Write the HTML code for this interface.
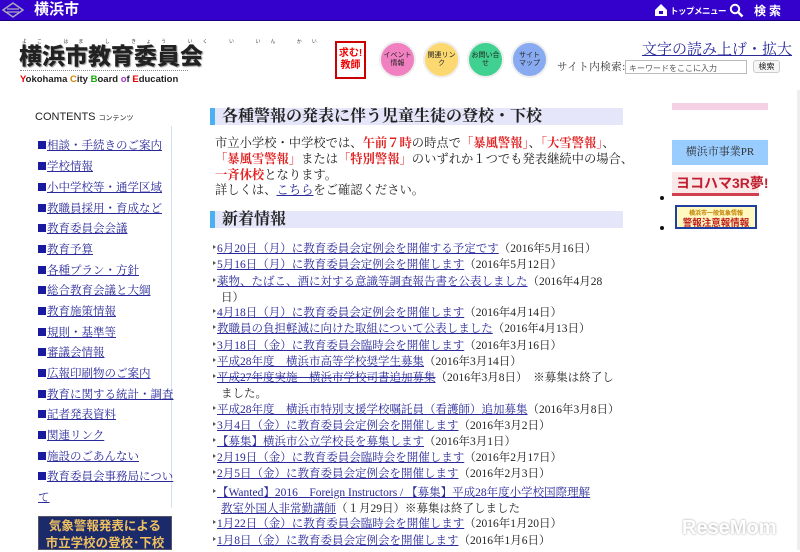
<!DOCTYPE html>
<html><head><meta charset="utf-8"><style>
*{margin:0;padding:0;box-sizing:border-box}
body{width:800px;height:550px;overflow:hidden;background:#fff;font-family:"Liberation Serif","Noto Serif CJK SC","Noto Sans CJK JP",serif;color:#222;position:relative}
.abs{position:absolute}
a{color:#2a2a9a;text-decoration:underline}
.top{left:0;top:0;width:800px;height:21px;background:#3300cc;border-bottom:1px solid #1a0080}
.g{font-family:"Liberation Sans","Noto Sans CJK JP",sans-serif}
.nav div{position:absolute;left:38px;font-size:11.5px;white-space:nowrap}
.nav a{color:#2a2a9a}
.sq{display:inline-block;width:8px;height:8px;background:#1a1aa0;margin-right:1px;vertical-align:0}
.h{left:210px;width:413px;height:17px;background:#e6e6fa;font-size:16px;line-height:17px;font-weight:bold;padding-left:7px;border-left:5px solid #4ab0f0;color:#222}
.p{left:215px;font-size:12.3px;line-height:15.8px;width:420px}
.r{color:#e02020;font-weight:bold}
.news div{position:absolute;left:217px;font-size:11.5px;white-space:nowrap}
.news div.m:before{content:"";position:absolute;left:-4px;top:5px;border-left:3px solid #555;border-top:2.5px solid transparent;border-bottom:2.5px solid transparent}
.c{border-radius:50%;width:37px;height:37px;top:41px;font-size:7px;text-align:center;display:flex;align-items:center;justify-content:center;line-height:8px;color:#222;font-family:"Liberation Sans","Noto Sans CJK JP",sans-serif;border:2px solid #eee}
</style></head><body>
<div class="abs top"></div>
<svg class="abs" style="left:2px;top:2px" width="22" height="16" viewBox="0 0 22 16"><path d="M1 8 L11 1 L21 8 L11 15 Z" fill="none" stroke="#aab" stroke-width="1.5"/><path d="M5 7h12M5 10h12" stroke="#aab" stroke-width="1.3"/></svg>
<div class="abs g" style="left:34px;top:1px;color:#fff;font-weight:bold;font-size:15px;line-height:18px">横浜市</div>
<svg class="abs" style="left:654px;top:3px" width="14" height="14" viewBox="0 0 14 14"><path d="M1 7 L7 1 L13 7 V13 H1Z" fill="#fff"/><rect x="5" y="8" width="4" height="3" fill="#3300cc"/></svg>
<div class="abs g" style="left:670px;top:5px;color:#fff;font-size:8.5px;font-weight:bold;letter-spacing:-0.5px;white-space:nowrap">トップメニュー</div>
<svg class="abs" style="left:729px;top:3px" width="15" height="15" viewBox="0 0 15 15"><circle cx="6" cy="6" r="4.2" fill="none" stroke="#fff" stroke-width="2"/><path d="M9 9 L13.5 13.5" stroke="#fff" stroke-width="2.5"/></svg>
<div class="abs g" style="left:754px;top:2px;color:#fff;font-size:12px;font-weight:bold;letter-spacing:3px">検索</div>

<div class="abs g" style="left:22px;top:38px;font-size:5px;color:#444;letter-spacing:10px;white-space:nowrap">よこ はま し きょう いく い いん かい</div>
<div class="abs g" style="left:19px;top:43px;font-size:23px;font-weight:900;color:#222;line-height:26px;text-shadow:1px 1px 1px #999">横浜市教育委員会</div>
<div class="abs" style="left:20px;top:70px;width:168px;border-top:1px dotted #888"></div>
<div class="abs g" style="left:20px;top:74px;font-size:9.5px;font-weight:bold;color:#222;white-space:nowrap"><span style="color:#e00">Y</span>okohama <span style="color:#c80">C</span>ity <span style="color:#1a0">B</span>oard <span style="color:#a3c">o</span>f <span style="color:#e00">E</span>ducation</div>

<div class="abs g" style="left:335px;top:41px;width:31px;height:38px;border:2px solid #c00;color:#e00;font-size:10px;font-weight:bold;line-height:12px;text-align:center;padding-top:5px">求む!<br>教師</div>
<div class="abs c" style="left:379px;background:#f080c0">イベント<br>情報</div>
<div class="abs c" style="left:423px;background:#fcd870">関連リンク</div>
<div class="abs c" style="left:467px;background:#40d090">お問い合せ</div>
<div class="abs c" style="left:511px;background:#88aaf0">サイト<br>マップ</div>
<div class="abs" style="left:642px;top:38px;font-size:15px;color:#2a2a9a;text-decoration:underline;white-space:nowrap">文字の読み上げ・拡大</div>
<div class="abs" style="left:557px;top:59px;font-size:10.5px;color:#333;white-space:nowrap;letter-spacing:0.5px">サイト内検索:</div>
<div class="abs g" style="left:625px;top:60px;width:122px;height:14px;border:1px solid #bbb;font-size:8px;color:#555;padding:2px 3px">キーワードをここに入力</div>
<div class="abs g" style="left:753px;top:60px;width:27px;height:13px;border:1px solid #ccc;border-radius:3px;background:#f6f6f6;font-size:8px;text-align:center;line-height:11px">検索</div>

<div class="abs g" style="left:35px;top:111px;font-size:11px;color:#222">CONTENTS <span style="font-size:7px">コンテンツ</span></div>
<div class="abs" style="left:171px;top:126px;width:1px;height:382px;background:#cfe3f0"></div>
<div class="nav">
<div style="top:137px"><a><span class="sq"></span>相談・手続きのご案内</a></div>
<div style="top:158px"><a><span class="sq"></span>学校情報</a></div>
<div style="top:179px"><a><span class="sq"></span>小中学校等・通学区域</a></div>
<div style="top:200px"><a><span class="sq"></span>教職員採用・育成など</a></div>
<div style="top:220px"><a><span class="sq"></span>教育委員会会議</a></div>
<div style="top:241px"><a><span class="sq"></span>教育予算</a></div>
<div style="top:262px"><a><span class="sq"></span>各種プラン・方針</a></div>
<div style="top:282px"><a><span class="sq"></span>総合教育会議と大綱</a></div>
<div style="top:303px"><a><span class="sq"></span>教育施策情報</a></div>
<div style="top:324px"><a><span class="sq"></span>規則・基準等</a></div>
<div style="top:344px"><a><span class="sq"></span>審議会情報</a></div>
<div style="top:365px"><a><span class="sq"></span>広報印刷物のご案内</a></div>
<div style="top:386px"><a><span class="sq"></span>教育に関する統計・調査</a></div>
<div style="top:406px"><a><span class="sq"></span>記者発表資料</a></div>
<div style="top:427px"><a><span class="sq"></span>関連リンク</a></div>
<div style="top:448px"><a><span class="sq"></span>施設のごあんない</a></div>
<div style="top:468px"><a><span class="sq"></span>教育委員会事務局につい</a></div>
<div style="top:489px"><a>て</a></div>
</div>
<div class="abs g" style="left:38px;top:516px;width:134px;height:34px;background:#1a2a6a;border:1px solid #556;color:#f0c060;font-weight:bold;font-size:12.5px;text-align:center;line-height:17px;padding-top:1px">気象警報発表による<br>市立学校の登校･下校</div>

<div class="abs h" style="top:108px">各種警報の発表に伴う児童生徒の登校・下校</div>
<div class="abs p" style="top:136px">市立小学校・中学校では、<span class="r">午前７時</span>の時点で<span class="r">「暴風警報」</span>、<span class="r">「大雪警報」</span>、<br><span class="r">「暴風雪警報」</span>または<span class="r">「特別警報」</span>のいずれか１つでも発表継続中の場合、<br><span class="r">一斉休校</span>となります。<br>詳しくは、<a>こちら</a>をご確認ください。</div>
<div class="abs h" style="top:211px">新着情報</div>
<div class="news">
<div class="m" style="top:240px"><a>6月20日（月）に教育委員会定例会を開催する予定です</a>（2016年5月16日）</div>
<div class="m" style="top:256px"><a>5月16日（月）に教育委員会定例会を開催します</a>（2016年5月12日）</div>
<div class="m" style="top:273px"><a>薬物、たばこ、酒に対する意識等調査報告書を公表しました</a>（2016年4月28</div>
<div style="top:289px;left:221px">日）</div>
<div class="m" style="top:304px"><a>4月18日（月）に教育委員会定例会を開催します</a>（2016年4月14日）</div>
<div class="m" style="top:320px"><a>教職員の負担軽減に向けた取組について公表しました</a>（2016年4月13日）</div>
<div class="m" style="top:337px"><a>3月18日（金）に教育委員会臨時会を開催します</a>（2016年3月16日）</div>
<div class="m" style="top:353px"><a>平成28年度　横浜市高等学校奨学生募集</a>（2016年3月14日）</div>
<div class="m" style="top:369px"><a style="text-decoration:line-through underline">平成27年度実施　横浜市学校司書追加募集</a>（2016年3月8日）　※募集は終了し</div>
<div style="top:385px;left:221px">ました。</div>
<div class="m" style="top:401px"><a>平成28年度　横浜市特別支援学校嘱託員（看護師）追加募集</a>（2016年3月8日）</div>
<div class="m" style="top:417px"><a>3月4日（金）に教育委員会定例会を開催します</a>（2016年3月2日）</div>
<div class="m" style="top:433px"><a>【募集】横浜市公立学校長を募集します</a>（2016年3月1日）</div>
<div class="m" style="top:449px"><a>2月19日（金）に教育委員会臨時会を開催します</a>（2016年2月17日）</div>
<div class="m" style="top:465px"><a>2月5日（金）に教育委員会定例会を開催します</a>（2016年2月3日）</div>
<div class="m" style="top:484px"><a>【Wanted】2016　Foreign Instructors / 【募集】平成28年度小学校国際理解</a></div>
<div style="top:500px;left:221px"><a>教室外国人非常勤講師</a>（１月29日）※募集は終了しました</div>
<div class="m" style="top:515px"><a>1月22日（金）に教育委員会臨時会を開催します</a>（2016年1月20日）</div>
<div class="m" style="top:532px"><a>1月8日（金）に教育委員会定例会を開催します</a>（2016年1月6日）</div>
</div>

<div class="abs" style="left:672px;top:103px;width:96px;height:7px;background:#f6d0e4"></div>
<div class="abs" style="left:672px;top:140px;width:96px;height:25px;background:#99ccff;font-size:11px;text-align:center;line-height:25px;color:#333">横浜市事業PR</div>
<div class="abs g" style="left:672px;top:172px;width:87px;height:24px;background:#fbe8e8;border-bottom:3px solid #d04050;color:#c02030;font-weight:bold;font-size:14px;line-height:22px;padding-left:4px;white-space:nowrap">ヨコハマ3R夢!</div>
<div class="abs" style="left:660px;top:196px;width:4px;height:4px;border-radius:50%;background:#111"></div>
<div class="abs g" style="left:675px;top:205px;width:82px;height:24px;background:#fff8c0;border:2px solid #2040a0;color:#c02020;font-weight:bold;font-size:9.5px;text-align:center;line-height:10px;padding-top:1px"><span style="font-size:6px;color:#c08000">横浜市一般気象情報</span><br>警報注意報情報</div>
<div class="abs" style="left:660px;top:226px;width:4px;height:4px;border-radius:50%;background:#111"></div>
<div class="abs" style="left:797px;top:90px;width:3px;height:460px;background:#eee"></div>
<div class="abs g" style="left:682px;top:517px;font-size:20px;font-weight:bold;color:#fff;text-shadow:0 0 2px #888;opacity:.85">ReseMom</div>
</body></html>
